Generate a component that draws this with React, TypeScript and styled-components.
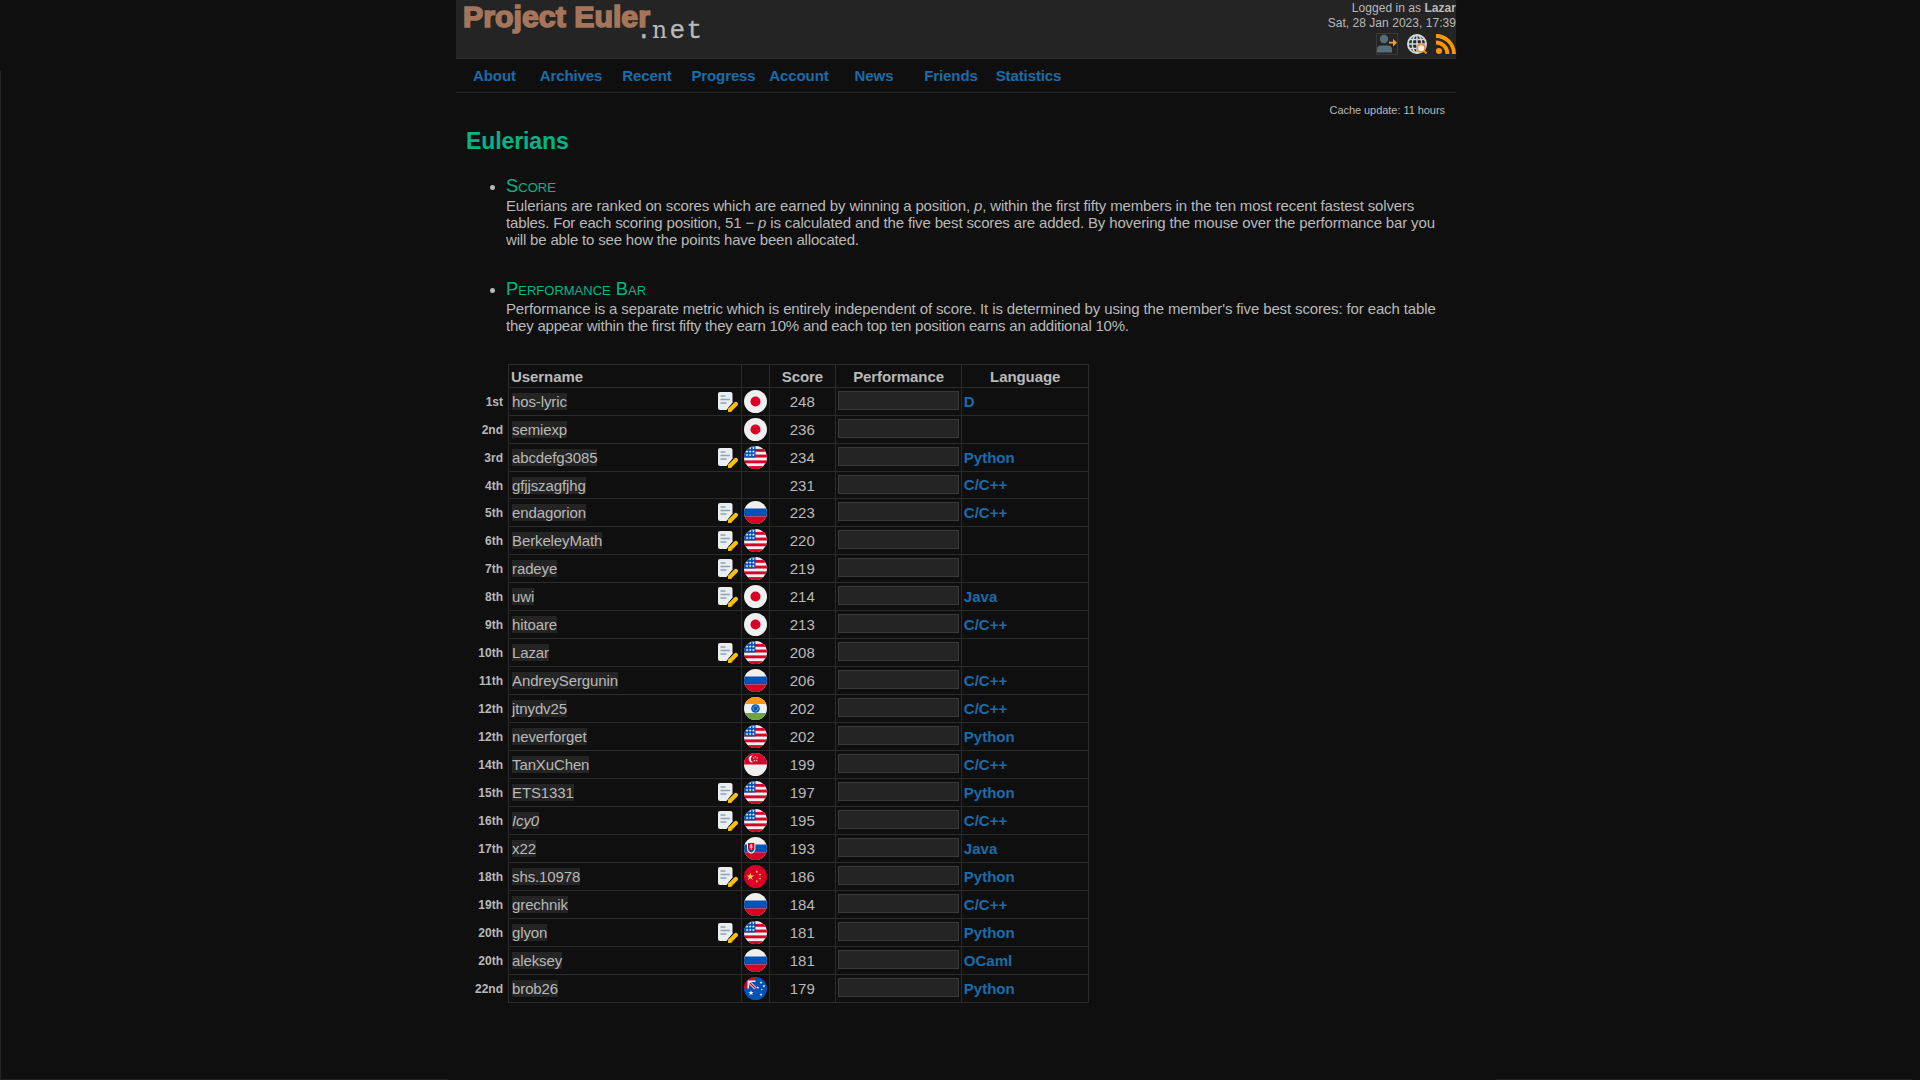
import React from "react";
import styled, { createGlobalStyle, css } from "styled-components";

const Global = createGlobalStyle`
  html { background: #0f0f0f; }
  body { margin: 0; background: #0f0f0f; color: #b9b9b9; font-family: "Liberation Sans", Arial, sans-serif; font-size: 15px; line-height: 17px; overflow: hidden; }
`;

const Page = styled.div`
  position: relative;
  height: 1080px;
  box-sizing: border-box;
  padding-left: 456px;
`;
const Frame = styled.div`
  position: absolute;
  left: 0;
  top: 71px;
  right: 8px;
  bottom: 0;
  border-left: 1px solid #242424;
  background: linear-gradient(90deg, #202020 447px, transparent 447px, transparent 1495px, #202020 1495px) bottom / 100% 1px no-repeat;
  pointer-events: none;
`;
const Container = styled.div`width: 1000px;`;

const Header = styled.header`
  display: flex;
  justify-content: space-between;
  height: 58px;
  background: #242424;
  border-bottom: 1px solid #2b2b2b;
`;
const Logo = styled.svg`display: block;`;
const Info = styled.div`
  padding-top: 1px;
  font-size: 12px;
  line-height: 15px;
  letter-spacing: 0.04px;
  text-align: right;
`;
const Icons = styled.div`
  display: flex;
  justify-content: flex-end;
  align-items: center;
  margin-top: 2px;
`;
const IconBox = styled.span<{ $framed?: boolean; $gap?: number }>`
  display: flex;
  width: 20px;
  height: 20px;
  margin-left: ${(p) => p.$gap ?? 0}px;
  ${(p) => p.$framed && css`border: 1px solid #3a3a3a;`}
`;

const Nav = styled.nav`
  display: flex;
  height: 33px;
  border-bottom: 1px solid #242424;
`;
const NavItem = styled.a<{ $w: number }>`
  width: ${(p) => p.$w}px;
  text-align: center;
  line-height: 33px;
  letter-spacing: -0.1px;
  font-weight: bold;
  color: #1a6caa;
`;

const Cache = styled.div`
  margin-top: 9px;
  padding-right: 11px;
  text-align: right;
  font-size: 11px;
  line-height: 17px;
  letter-spacing: -0.05px;
`;
const Title = styled.h2`
  margin: 9px 0 0 10px;
  font-size: 23px;
  line-height: 26px;
  letter-spacing: -0.1px;
  color: #00b586;
`;
const Notes = styled.ul`
  margin: 21px 0 0;
  padding: 0 10px 0 50px;
`;
const Note = styled.li`margin-bottom: 31px;`;
const NoteTitle = styled.div`
  font-size: 18.4px;
  line-height: 21px;
  font-variant: small-caps;
  color: #00b586;
`;
const NoteLine = styled.div<{ $track: number }>`
  position: relative;
  top: 1px;
  white-space: nowrap;
  letter-spacing: ${(p) => p.$track}px;
`;

const Table = styled.table`
  width: 623px;
  margin: 0 0 0 10px;
  table-layout: fixed;
  border-collapse: collapse;
`;
const HeadRow = styled.tr`height: 23px;`;
const Row = styled.tr<{ $h: number }>`height: ${(p) => p.$h}px;`;
const Cell = styled.td<{ $center?: boolean }>`
  padding: 0 2px;
  border: 1px solid #2b2b2b;
  text-align: ${(p) => (p.$center ? "center" : "left")};
`;
const HeadCell = styled(Cell).attrs({ as: "th" })`
  font-weight: bold;
  letter-spacing: -0.08px;
  padding-left: 2.5px;
`;
const Rank = styled.td`
  padding: 2px 4.5px 0 0;
  text-align: right;
  font-size: 12px;
  font-weight: bold;
`;
const NameLine = styled.div`
  display: flex;
  justify-content: space-between;
  align-items: center;
  padding: 0 0.5px 0 1.5px;
`;
const Name = styled.span<{ $italic?: boolean }>`
  background: #242424;
  letter-spacing: -0.12px;
  font-style: ${(p) => (p.$italic ? "italic" : "normal")};
`;
const Bar = styled.div`
  height: 17px;
  margin: 0 0 2px;
  border: 1px solid #3a3a3a;
  background: #242424;
`;
const Lang = styled.b<{ $up?: boolean }>`
  display: block;
  color: #1a6caa;
  margin-top: ${(p) => (p.$up ? -2 : 0)}px;
`;
const FlagSvg = styled.svg`display: block; margin: 0 auto;`;

function NoteIcon() {
  return (
    <svg width="20" height="20" viewBox="0 0 20 20">
      <path d="M2 0h10.5q2 0 2 2v8.5L8.5 18H2q-2 0-2-2V2q0-2 2-2z" fill="#e9eef2" />
      <path d="M3 4h4M3 7.5h8.5M3 11h5" stroke="#90a4ae" strokeWidth="1.4" strokeLinecap="round" />
      <path d="M12.3 17.6 17.9 12" stroke="#0f0f0f" strokeWidth="5.5" />
      <path d="M12.3 17.5 17.8 12" stroke="#ffc107" strokeWidth="4.2" strokeLinecap="round" />
      <path d="M10 20l.3-4 3.7 3.7z" fill="#ffc107" />
    </svg>
  );
}

const star = (cx: number, cy: number, r: number) =>
  Array.from({ length: 10 }, (_, i) => {
    const a = -Math.PI / 2 + (i * Math.PI) / 5;
    const q = i % 2 ? r * 0.4 : r;
    return `${cx + q * Math.cos(a)},${cy + q * Math.sin(a)}`;
  }).join(" ");

function FlagArt({ code }: { code: string }) {
  const red = "#d80027", blue = "#0052b4", white = "#f0f0f0";
  switch (code) {
    case "jp":
      return <><rect width="23" height="23" fill={white} /><circle cx="11.5" cy="11.5" r="5" fill={red} /></>;
    case "us":
      return (
        <>
          <rect width="23" height="23" fill={white} />
          {[2.9, 8.6, 14.4, 20.1].map((y) => <rect key={y} y={y} width="23" height="2.9" fill={red} />)}
          <rect width="11.5" height="11.5" fill={blue} />
          {[2, 5.5, 9].map((y) => [3, 6.2, 9.4].map((x) => <polygon key={`${x}-${y}`} points={star(x, y, 1.6)} fill={white} />))}
        </>
      );
    case "ru":
      return <><rect width="23" height="23" fill={white} /><rect y="7.5" width="23" height="8" fill={blue} /><rect y="15.5" width="23" height="8" fill={red} /></>;
    case "in":
      return <><rect width="23" height="23" fill={white} /><rect width="23" height="7" fill="#ff9811" /><rect y="16" width="23" height="7" fill="#6da544" /><circle cx="11.5" cy="11.5" r="4.3" fill={blue} /><circle cx="11.5" cy="11.5" r="2.4" fill="none" stroke={white} strokeWidth="0.8" strokeDasharray="1 .6" /></>;
    case "sg":
      return <><rect width="23" height="23" fill={white} /><rect width="23" height="11.5" fill={red} /><path d="M9 2.5a3.5 3.5 0 1 0 0 6.8a3.8 3.8 0 0 1 0-6.8z" fill={white} />{[[11.5, 3.5], [9.8, 5], [13.2, 5], [10.4, 7.6], [12.6, 7.6]].map(([x, y], i) => <polygon key={i} points={star(x, y, 1.1)} fill={white} />)}</>;
    case "sk":
      return <><rect width="23" height="23" fill={white} /><rect y="7.5" width="23" height="8" fill={blue} /><rect y="15.5" width="23" height="8" fill={red} /><path d="M3 6h8.4v6q0 3.2-4.2 4.8Q3 15.2 3 12z" fill={white} /><path d="M4 6h6.4v6q0 2.2-3.2 3.5Q4 14.2 4 12z" fill={red} /><path d="M7.2 7v6M5.6 10h3.2M6 8.2h2.4" stroke={white} strokeWidth="0.9" /><path d="M5 13.2q2.2-1.2 4.4 0-1 1.6-2.2 2-1.2-.4-2.2-2z" fill={blue} /></>;
    case "cn":
      return <><rect width="23" height="23" fill={red} /><polygon points={star(6.3, 11.7, 4)} fill="#ffda44" />{[[12.8, 6.8], [16, 9.5], [16, 13.5], [12.8, 16.3]].map(([x, y], i) => <polygon key={i} points={star(x, y, 1.5)} fill="#ffda44" />)}</>;
    default:
      return (
        <>
          <rect width="23" height="23" fill={blue} />
          <path d="M0 0h11.5v3.5H3.5v8H0z" fill={red} />
          <path d="M4.3 11.5V4.3h7.2" fill="none" stroke={white} strokeWidth="1.5" />
          <path d="M5 5l6.5 6.5" stroke={white} strokeWidth="3" />
          <path d="M6 6l5.5 5.5" stroke={red} strokeWidth="1.3" />
          <polygon points={star(7, 16, 2.8)} fill={white} />
          {[[17, 5.5], [13.8, 10.5], [20, 9], [17, 17.5]].map(([x, y], i) => <polygon key={i} points={star(x, y, 1.6)} fill={white} />)}
          <circle cx="17.8" cy="12.5" r=".7" fill={white} />
        </>
      );
  }
}

function Flag({ code, id }: { code: string; id: number }) {
  return (
    <FlagSvg width="23" height="23" viewBox="0 0 23 23">
      <defs><clipPath id={`flag-${id}`}><circle cx="11.5" cy="11.5" r="11.5" /></clipPath></defs>
      <g clipPath={`url(#flag-${id})`}><FlagArt code={code} /></g>
    </FlagSvg>
  );
}

type Entry = [string, string, boolean, string, number, string];
const entries: Entry[] = [
  ["1st", "hos-lyric", true, "jp", 248, "D"],
  ["2nd", "semiexp", false, "jp", 236, ""],
  ["3rd", "abcdefg3085", true, "us", 234, "Python"],
  ["4th", "gfjjszagfjhg", false, "", 231, "C/C++"],
  ["5th", "endagorion", true, "ru", 223, "C/C++"],
  ["6th", "BerkeleyMath", true, "us", 220, ""],
  ["7th", "radeye", true, "us", 219, ""],
  ["8th", "uwi", true, "jp", 214, "Java"],
  ["9th", "hitoare", false, "jp", 213, "C/C++"],
  ["10th", "Lazar", true, "us", 208, ""],
  ["11th", "AndreySergunin", false, "ru", 206, "C/C++"],
  ["12th", "jtnydv25", false, "in", 202, "C/C++"],
  ["12th", "neverforget", false, "us", 202, "Python"],
  ["14th", "TanXuChen", false, "sg", 199, "C/C++"],
  ["15th", "ETS1331", true, "us", 197, "Python"],
  ["16th", "Icy0", true, "us", 195, "C/C++"],
  ["17th", "x22", false, "sk", 193, "Java"],
  ["18th", "shs.10978", true, "cn", 186, "Python"],
  ["19th", "grechnik", false, "ru", 184, "C/C++"],
  ["20th", "glyon", true, "us", 181, "Python"],
  ["20th", "aleksey", false, "ru", 181, "OCaml"],
  ["22nd", "brob26", false, "au", 179, "Python"],
];

const nav: [string, number][] = [
  ["About", 77], ["Archives", 76], ["Recent", 76], ["Progress", 77],
  ["Account", 74], ["News", 76], ["Friends", 78], ["Statistics", 77],
];

export default function App() {
  return (
    <Page>
      <Global />
      <Frame />
      <Container>
        <Header>
          <Logo width="260" height="58">
            <text x="7" y="26.5" fontFamily="Liberation Sans" fontWeight="bold" fontSize="30" textLength="187" lengthAdjust="spacingAndGlyphs" stroke="#a4755a" strokeWidth="1.6" fill="#a4755a">Project Euler</text>
            <text y="38" fontFamily="Liberation Mono" fontSize="26" stroke="#b9b9b9" strokeWidth=".3" fill="#b9b9b9">
              <tspan x="180">.</tspan>
              <tspan x="196" fontFamily="DejaVu Serif" fontSize="23.5" strokeWidth="0">n</tspan>
              <tspan x="213.5">e</tspan>
              <tspan x="230.5">t</tspan>
            </text>
          </Logo>
          <Info>
            <div>Logged in as <b>Lazar</b></div>
            <div>Sat, 28 Jan 2023, 17:39</div>
            <Icons>
              <IconBox $framed>
                <svg width="20" height="20" viewBox="0 0 20 20">
                  <circle cx="7" cy="5" r="4.2" fill="#546e7a" />
                  <path d="M0 18.5v-3q0-4 4-4h7q4 0 4 4v3z" fill="#546e7a" />
                  <path d="M12 7.8h4V4.8l4 3.9-4 3.9V9.6h-4z" fill="#ff9820" />
                </svg>
              </IconBox>
              <IconBox $gap={9}>
                <svg width="20" height="20" viewBox="0 0 20 20" fill="none">
                  <circle cx="10" cy="10" r="9" stroke="#cfd8dc" strokeWidth="2" />
                  <path d="M10 1v18M1 10h18M3 5.5h14M3 14.5h14" stroke="#cfd8dc" strokeWidth="1.5" />
                  <ellipse cx="10" cy="10" rx="4.7" ry="9" stroke="#cfd8dc" strokeWidth="1.5" />
                  <path d="m17 17 2.5 2.5" stroke="#f58a1f" strokeWidth="2" />
                  <circle cx="14.2" cy="14.2" r="3.8" fill="#f5f5f5" stroke="#f58a1f" strokeWidth="1.6" />
                </svg>
              </IconBox>
              <IconBox $gap={9}>
                <svg width="20" height="20" viewBox="0 0 20 20" fill="none">
                  <circle cx="3" cy="17" r="3" fill="#ff9800" />
                  <path d="M0 8.5A11.5 11.5 0 0 1 11.5 20M0 2A18 18 0 0 1 18 20" stroke="#ff9800" strokeWidth="3.8" />
                </svg>
              </IconBox>
            </Icons>
          </Info>
        </Header>
        <Nav>{nav.map(([label, w]) => <NavItem key={label} $w={w}>{label}</NavItem>)}</Nav>
        <Cache>Cache update: 11 hours</Cache>
        <Title>Eulerians</Title>
        <Notes>
          <Note>
            <NoteTitle>Score</NoteTitle>
            <NoteLine $track={-0.15}>Eulerians are ranked on scores which are earned by winning a position, <i>p</i>, within the first fifty members in the ten most recent fastest solvers</NoteLine>
            <NoteLine $track={-0.15}>tables. For each scoring position, 51 − <i>p</i> is calculated and the five best scores are added. By hovering the mouse over the performance bar you</NoteLine>
            <NoteLine $track={-0.18}>will be able to see how the points have been allocated.</NoteLine>
          </Note>
          <Note>
            <NoteTitle>Performance Bar</NoteTitle>
            <NoteLine $track={-0.13}>Performance is a separate metric which is entirely independent of score. It is determined by using the member's five best scores: for each table</NoteLine>
            <NoteLine $track={-0.22}>they appear within the first fifty they earn 10% and each top ten position earns an additional 10%.</NoteLine>
          </Note>
        </Notes>
        <Table>
          <colgroup>
            {[42, 233, 28, 66, 126, 127].map((w, i) => <col key={i} style={{ width: w }} />)}
          </colgroup>
          <tbody>
            <HeadRow>
              <td />
              <HeadCell>Username</HeadCell>
              <HeadCell />
              <HeadCell $center>Score</HeadCell>
              <HeadCell $center>Performance</HeadCell>
              <HeadCell $center>Language</HeadCell>
            </HeadRow>
            {entries.map(([rank, name, note, flag, score, lang], i) => (
              <Row key={name} $h={flag ? 28 : 27}>
                <Rank>{rank}</Rank>
                <Cell><NameLine><Name $italic={name === "Icy0"}>{name}</Name>{note && <NoteIcon />}</NameLine></Cell>
                <Cell>{flag && <Flag code={flag} id={i} />}</Cell>
                <Cell $center>{score}</Cell>
                <Cell><Bar /></Cell>
                <Cell><Lang $up={!flag}>{lang}</Lang></Cell>
              </Row>
            ))}
          </tbody>
        </Table>
      </Container>
    </Page>
  );
}
